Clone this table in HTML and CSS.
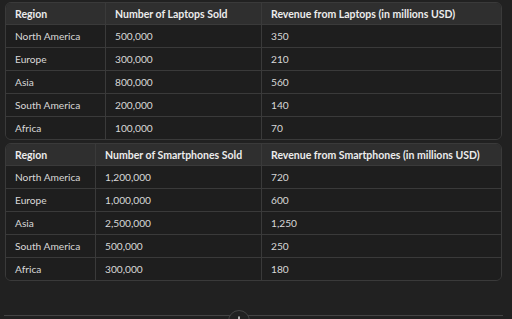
FILE: index.html
```html
<!DOCTYPE html>
<html>
<head>
<meta charset="utf-8">
<link rel="stylesheet" href="styles.css">
</head>
<body>
<div class="page">
  <div class="tbl-wrap">
    <table class="tbl t1">
      <thead>
        <tr><th class="c1">Region</th><th class="c2">Number of Laptops Sold</th><th>Revenue from Laptops (in millions USD)</th></tr>
      </thead>
      <tbody>
        <tr><td>North America</td><td>500,000</td><td>350</td></tr>
        <tr><td>Europe</td><td>300,000</td><td>210</td></tr>
        <tr><td>Asia</td><td>800,000</td><td>560</td></tr>
        <tr><td>South America</td><td>200,000</td><td>140</td></tr>
        <tr><td>Africa</td><td>100,000</td><td>70</td></tr>
      </tbody>
    </table>
  </div>
  <div class="tbl-wrap">
    <table class="tbl t2">
      <thead>
        <tr><th class="c1">Region</th><th class="c2">Number of Smartphones Sold</th><th>Revenue from Smartphones (in millions USD)</th></tr>
      </thead>
      <tbody>
        <tr><td>North America</td><td>1,200,000</td><td>720</td></tr>
        <tr><td>Europe</td><td>1,000,000</td><td>600</td></tr>
        <tr><td>Asia</td><td>2,500,000</td><td>1,250</td></tr>
        <tr><td>South America</td><td>500,000</td><td>250</td></tr>
        <tr><td>Africa</td><td>300,000</td><td>180</td></tr>
      </tbody>
    </table>
  </div>
  <div class="footer">
    <div class="scroll-btn">
      <svg width="12" height="12" viewBox="0 0 12 12"><path d="M6 2v8M2.5 6.5L6 10l3.5-3.5" fill="none" stroke="#ececec" stroke-width="1.4" stroke-linecap="round" stroke-linejoin="round"/></svg>
    </div>
  </div>
</div>
</body>
</html>
```

FILE: styles.css
```css
html, body {
  margin: 0;
  padding: 0;
  background: #212121;
  height: 100%;
  overflow: hidden;
}
body {
  font-family: Lato, "Noto Sans", sans-serif;
  font-size: 10.2px;
  color: #d8d8d8;
}
.page {
  padding: 2px 10px 0 5px;
  display: flex;
  flex-direction: column;
  gap: 3px;
  position: relative;
}
.tbl-wrap {
  border: 1px solid #3a3a3a;
  border-radius: 6px;
  overflow: hidden;
}
.tbl {
  width: 100%;
  border-collapse: collapse;
  table-layout: fixed;
}
.tbl th, .tbl td {
  height: 22px;
  padding: 0 9px;
  text-align: left;
  border-left: 1px solid #3a3a3a;
  border-top: 1px solid #3a3a3a;
  white-space: nowrap;
}
.tbl th:first-child, .tbl td:first-child { border-left: none; }
.tbl thead th {
  height: 21px;
  border-top: none;
  background: #2f2f2f;
  color: #ececec;
  font-size: 10.5px;
  font-weight: 700;
}
.tbl tbody td {
  background: #1e1e1e;
}
.t1 .c1 { width: 81px; }
.t1 .c2 { width: 137px; }
.t2 .c1 { width: 71px; }
.t2 .c2 { width: 147px; }
.footer {
  margin-top: 31px;
  border-top: 1px solid #444;
  margin-left: -1px;
  margin-right: -1px;
  position: relative;
  height: 3px;
}
.scroll-btn {
  position: absolute;
  left: 224px;
  top: -6px;
  width: 22px;
  height: 22px;
  border-radius: 50%;
  border: 1px solid #444;
  background: #212121;
  display: flex;
  justify-content: center;
  padding-top: 4px;
  box-sizing: border-box;
}
```
